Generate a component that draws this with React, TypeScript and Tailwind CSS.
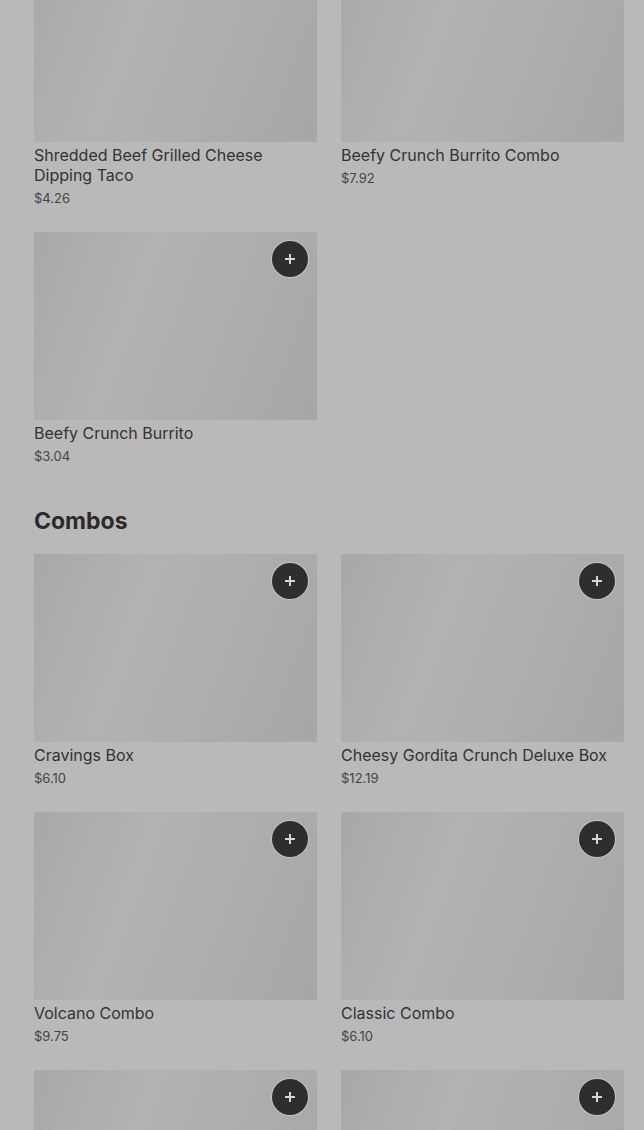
const sections = [
  {
    title: null as string | null,
    items: [
      { name: "Shredded Beef Grilled Cheese Dipping Taco", price: "$4.26" },
      { name: "Beefy Crunch Burrito Combo", price: "$7.92" },
      { name: "Beefy Crunch Burrito", price: "$3.04" },
    ],
  },
  {
    title: "Combos",
    items: [
      { name: "Cravings Box", price: "$6.10" },
      { name: "Cheesy Gordita Crunch Deluxe Box", price: "$12.19" },
      { name: "Volcano Combo", price: "$9.75" },
      { name: "Classic Combo", price: "$6.10" },
      { name: "Nacho Fries Box", price: "$7.49" },
      { name: "Crunchwrap Supreme Combo", price: "$8.99" },
    ],
  },
];

function PlusIcon() {
  return (
    <svg width="12" height="12" viewBox="0 0 12 12" fill="none">
      <path d="M6 1v10M1 6h10" stroke="#d6d6d6" strokeWidth="2" />
    </svg>
  );
}

function ItemCard({ name, price }: { name: string; price: string }) {
  return (
    <div className="flex flex-col">
      <div className="relative h-[188px] bg-[linear-gradient(110deg,#a8a8a8_0%,#b2b2b2_35%,#adadad_65%,#a7a7a7_100%)]">
        <button className="absolute top-[9px] right-[9px] w-9 h-9 rounded-full bg-[#2e2e2e] flex items-center justify-center ring-1 ring-[#c4c4c4]">
          <PlusIcon />
        </button>
      </div>
      <p className="mt-[3px] text-[16px] leading-5 font-[430] text-[#333333]">
        {name}
      </p>
      <p className="mt-1 text-[13px] leading-[18px] text-[#454545]">{price}</p>
    </div>
  );
}

export default function App() {
  return (
    <div
      className="h-[1130px] overflow-hidden bg-[#b9b9b9]"
      style={{ fontFamily: "Inter, 'Liberation Sans', sans-serif" }}
    >
      <div className="pl-[34px] pr-[20px] -mt-[46px]">
        {sections.map((s, i) => (
          <section key={i} className={i > 0 ? "mt-[40px]" : ""}>
            {s.title && (
              <h2 className="text-[23px] leading-8 font-bold text-[#2b2b2b] mb-[17px]">
                {s.title}
              </h2>
            )}
            <div className="grid grid-cols-2 gap-x-6 gap-y-[25px]">
              {s.items.map((it) => (
                <ItemCard key={it.name} {...it} />
              ))}
            </div>
          </section>
        ))}
      </div>
    </div>
  );
}
